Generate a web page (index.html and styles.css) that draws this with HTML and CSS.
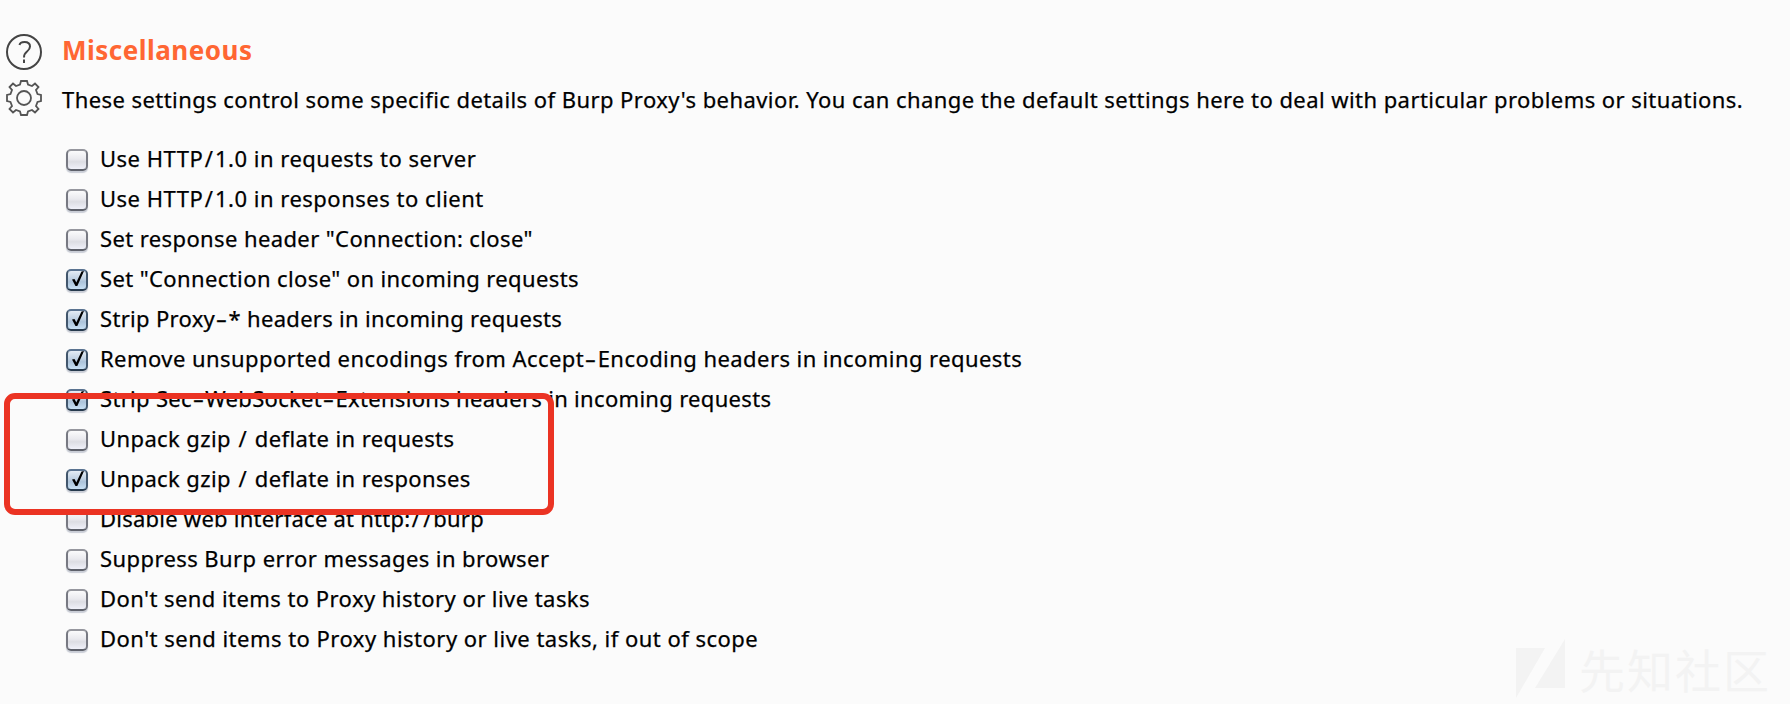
FILE: index.html
```html
<!DOCTYPE html>
<html lang="en">
<head>
<meta charset="utf-8">
<title>Miscellaneous</title>
<link rel="stylesheet" href="styles.css">
</head>
<body>
<main class="panel">
  <header class="section-head">
    <svg class="icon" viewBox="0 0 38 38"><circle cx="19" cy="19" r="17"/><path class="thin" d="M14.500 12Q15 9 19.500 9Q25 9 25 13.500Q25 16 22 18.500Q19 20.800 19 24.500M19 26.500V30"/></svg>
    <h1 class="title">Miscellaneous</h1>
    <svg class="icon" viewBox="0 0 38 38"><path class="gear" d="M15 5.500L16 2H22L23 5.500L27 7L30 4.500L33.500 8L31 11L32.500 15L36 16V22L32.500 23L31 27L33.500 30L30 33.500L27 31L23 32.500L22 36H16L15 32.500L11 31L8 33.500L4.500 30L7 27L5.500 23L2 22V16L5.500 15L7 11L4.500 8L8 4.500L11 7Z"/><circle class="gear" cx="19" cy="19" r="7"/></svg>
    <p class="desc">These settings control some specific details of Burp Proxy's behavior. You can change the default settings here to deal with particular problems or situations.</p>
  </header>
  <ul class="options">
    <li class="option"><span class="box"></span><span class="label wide">Use HTTP<span class="slash">/</span>1.0 in requests to server</span></li>
    <li class="option"><span class="box"></span><span class="label wide">Use HTTP<span class="slash">/</span>1.0 in responses to client</span></li>
    <li class="option"><span class="box"></span><span class="label snug">Set response header "Connection: close"</span></li>
    <li class="option"><span class="box checked"><svg class="tick" viewBox="0 0 22 24"><path d="M6 10.500L8.500 10L10.300 13.500L15.500 2.500L18 2L11.300 17H9.500Z"/></svg></span><span class="label snug">Set "Connection close" on incoming requests</span></li>
    <li class="option"><span class="box checked"><svg class="tick" viewBox="0 0 22 24"><path d="M6 10.500L8.500 10L10.300 13.500L15.500 2.500L18 2L11.300 17H9.500Z"/></svg></span><span class="label tight">Strip Proxy<span class="dash">-</span>* headers in incoming requests</span></li>
    <li class="option"><span class="box checked"><svg class="tick" viewBox="0 0 22 24"><path d="M6 10.500L8.500 10L10.300 13.500L15.500 2.500L18 2L11.300 17H9.500Z"/></svg></span><span class="label">Remove unsupported encodings from Accept<span class="dash">-</span>Encoding headers in incoming requests</span></li>
    <li class="option"><span class="box checked"><svg class="tick" viewBox="0 0 22 24"><path d="M6 10.500L8.500 10L10.300 13.500L15.500 2.500L18 2L11.300 17H9.500Z"/></svg></span><span class="label tight">Strip Sec<span class="dash">-</span>WebSocket<span class="dash">-</span>Extensions headers in incoming requests</span></li>
    <li class="option"><span class="box"></span><span class="label snug">Unpack gzip <span class="slash">/</span> deflate in requests</span></li>
    <li class="option"><span class="box checked"><svg class="tick" viewBox="0 0 22 24"><path d="M6 10.500L8.500 10L10.300 13.500L15.500 2.500L18 2L11.300 17H9.500Z"/></svg></span><span class="label snug">Unpack gzip <span class="slash">/</span> deflate in responses</span></li>
    <li class="option"><span class="box"></span><span class="label url">Disable web interface at http:<span class="slash">/</span><span class="slash">/</span>burp</span></li>
    <li class="option"><span class="box"></span><span class="label browser">Suppress Burp error messages in browser</span></li>
    <li class="option"><span class="box"></span><span class="label">Don't send items to Proxy history or live tasks</span></li>
    <li class="option"><span class="box"></span><span class="label loose">Don't send items to Proxy history or live tasks, if out of scope</span></li>
  </ul>
  <div class="highlight"></div>
  <div class="watermark">
    <svg class="mark" viewBox="0 0 50 60"><path d="M0 9H29L0 59ZM49 0V49H19Z"/></svg>
    <span>先知社区</span>
  </div>
</main>
</body>
</html>
```
FILE: styles.css
```css
body { margin: 0; background: #fbfbfb; color: #000; font-family: "Noto Sans", "Open Sans", sans-serif; font-size: 22px; }
.panel { position: relative; box-sizing: border-box; width: 1790px; height: 704px; padding: 33px 0 0 5px; overflow: hidden; }
.section-head { display: grid; grid-template-columns: 38px 1fr; column-gap: 19px; grid-auto-rows: 38px; row-gap: 8px; align-items: center; height: 106px; box-sizing: border-box; }
.icon { width: 38px; height: 38px; fill: none; stroke: #444; stroke-width: 2; }
.thin { stroke-width: 2; }
.gear { stroke: #555; stroke-width: 1.8; }
.title { margin: 0 0 4px; color: #ff6633; font-size: 26px; line-height: 34px; font-weight: 700; letter-spacing: .5px; white-space: nowrap; }
.desc { margin: 2px 0 0; line-height: 38px; letter-spacing: .435px; white-space: nowrap; -webkit-text-stroke: .25px #000; }
.options { list-style: none; margin: 0; padding: 0 0 0 61px; }
.option { display: flex; align-items: center; gap: 12px; height: 40px; }
.label { white-space: nowrap; line-height: 38px; margin-bottom: 2px; letter-spacing: .44px; -webkit-text-stroke: .25px #000; }
.wide { letter-spacing: .5px; }
.loose { letter-spacing: .48px; }
.snug { letter-spacing: .39px; }
.tight { letter-spacing: .31px; }
.url { letter-spacing: .24px; }
.browser { letter-spacing: .42px; }
.slash { margin: 0 1.5px; }
.dash { display: inline-block; margin: 0 3px; transform: scaleX(1.6); }
.box { position: relative; box-sizing: border-box; width: 22px; height: 22px; margin-top: 1px; border: 2px solid #777982; border-top-color: #96979e; border-bottom-color: #5e616b; border-radius: 5px; background: linear-gradient(#fbfbfc, #e9e9ee 45%, #dcdde3 60%, #f0f1fa); box-shadow: 0 2px 1px #c9cdd6; }
.checked { border-color: #41566c; border-top-color: #5a7390; border-bottom-color: #26394d; background: linear-gradient(#e5edf5, #bfd0e2 45%, #acc3da 60%, #c8e0f4); }
.tick { position: absolute; left: -2px; top: -2px; width: 22px; height: 24px; fill: #000; }
.highlight { position: absolute; left: 4px; top: 393px; width: 550px; height: 122px; box-sizing: border-box; border: 6px solid #eb3323; border-radius: 11px; }
.watermark { position: absolute; left: 1516px; top: 639px; display: flex; gap: 13px; color: #f3f3f3; font: 400 46px/58px "Noto Sans CJK SC", sans-serif; letter-spacing: 2px; white-space: nowrap; }
.mark { width: 50px; height: 60px; fill: #f3f3f3; }
```
